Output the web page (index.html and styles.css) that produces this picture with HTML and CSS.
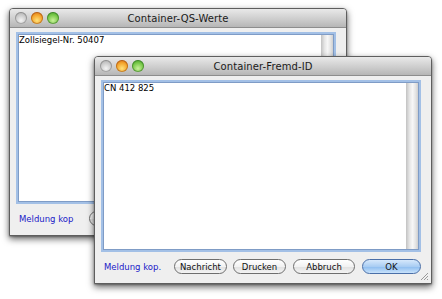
FILE: index.html
```html
<!DOCTYPE html>
<html>
<head>
<meta charset="utf-8">
<link rel="stylesheet" href="styles.css">
</head>
<body>
<div class="desk">
  <div class="win back">
    <div class="titlebar">
      <div class="lights"><span class="light close"></span><span class="light min"></span><span class="light zoom"></span></div>
      <div class="title">Container-QS-Werte</div>
    </div>
    <div class="field">
      <div class="text">Zollsiegel-Nr. 50407</div>
      <div class="scroll"></div>
    </div>
    <div class="actions">
      <span class="link">Meldung kop</span>
      <span class="btn w54">Nachricht</span>
      <span class="btn w54">Drucken</span>
      <span class="btn w63">Abbruch</span>
      <span class="btn w60 default">OK</span>
    </div>
  </div>
  <div class="win front">
    <div class="titlebar">
      <div class="lights"><span class="light close"></span><span class="light min"></span><span class="light zoom"></span></div>
      <div class="title">Container-Fremd-ID</div>
    </div>
    <div class="field">
      <div class="text">CN 412 825</div>
      <div class="scroll"></div>
    </div>
    <div class="actions">
      <span class="link">Meldung kop.</span>
      <span class="btn w54">Nachricht</span>
      <span class="btn w54">Drucken</span>
      <span class="btn w63">Abbruch</span>
      <span class="btn w60 default">OK</span>
    </div>
    <svg class="grip" width="9" height="9" viewBox="0 0 9 9">
      <line x1="1" y1="8" x2="8" y2="1" stroke="#999" stroke-width="1"/>
      <line x1="4" y1="8" x2="8" y2="4" stroke="#999" stroke-width="1"/>
      <line x1="7" y1="8" x2="8" y2="7" stroke="#999" stroke-width="1"/>
    </svg>
  </div>
</div>
</body>
</html>
```
FILE: styles.css
```css
* { box-sizing: border-box; }
html, body { margin: 0; padding: 0; background: #ffffff; }
body { width: 442px; height: 299px; overflow: hidden; font-family: "DejaVu Sans", "Liberation Sans", sans-serif; }
.desk { position: relative; width: 442px; height: 299px; }

.win {
  position: absolute;
  width: 338px;
  height: 228px;
  background: #efefef;
  border: 1px solid #5e5e5e;
  border-radius: 4px 4px 0 0;
  box-shadow: 0 3px 7px rgba(0,0,0,0.6), 0 1px 2px rgba(0,0,0,0.3);
  display: flex;
  flex-direction: column;
}
.back { left: 9px; top: 8px; }
.front { left: 94px; top: 56px; }

.titlebar {
  position: relative;
  height: 19px;
  flex: none;
  background: linear-gradient(#e9e9e9, #cbcbcb 60%, #b6b6b6);
  border-bottom: 1px solid #8d8d8d;
  border-radius: 3px 3px 0 0;
  display: flex;
  align-items: center;
  justify-content: center;
}
.lights {
  position: absolute;
  left: 5px;
  top: 3px;
  display: flex;
  gap: 4px;
}
.light {
  width: 12px;
  height: 12px;
  border-radius: 50%;
  display: block;
}
.light.close { background: radial-gradient(circle at 50% 70%, #f4f4f4, #c4c4c4 60%, #9c9c9c); box-shadow: inset 0 0 0 1px rgba(100,100,100,0.45); }
.light.min { background: radial-gradient(circle at 50% 70%, #ffe27a, #f3a22a 55%, #c0561a); box-shadow: inset 0 0 0 1px rgba(140,60,0,0.45); }
.light.zoom { background: radial-gradient(circle at 50% 70%, #c9f19a, #75c746 55%, #358c26); box-shadow: inset 0 0 0 1px rgba(30,90,20,0.45); }
.title {
  font-size: 10px;
  color: #1a1a1a;
  letter-spacing: 0.1px;
  margin-top: 1px;
}

.field {
  position: relative;
  flex: none;
  margin: 4px 10px 0 6px;
  height: 172px;
  background: #ffffff;
  border: 2px solid #a3c0e6;
  box-shadow: inset 0 0 0 1px #7f9cc6;
  display: flex;
}
.text {
  flex: 1;
  font-size: 8.5px;
  color: #000;
  padding: 1px 0 0 1px;
}
.scroll {
  width: 12px;
  flex: none;
  margin: 1px 1px 1px 0;
  background: linear-gradient(to right, #c2c2c2, #e6e6e6 30%, #f7f7f7 55%, #e4e4e4 80%, #cfcfcf);
}

.actions {
  flex: none;
  height: 15px;
  margin: 7px 10px 0 9px;
  display: flex;
  align-items: center;
  gap: 6px;
}
.link {
  font-size: 8.5px;
  color: #2020c8;
  width: 61px;
  margin-right: 4px;
}
.btn {
  height: 15px;
  border: 1px solid #6e6e6e;
  border-radius: 8px;
  background: linear-gradient(#ffffff, #f2f2f2 50%, #e0e0e0 51%, #f4f4f4);
  font-size: 8.5px;
  color: #111;
  display: flex;
  align-items: center;
  justify-content: center;
}
.w54 { width: 54px; }
.w63 { width: 63px; margin-left: 1px; }
.w60 { width: 60px; margin-left: 1px; }
.btn.default {
  border-color: #4a6fa8;
  background: linear-gradient(#d6e8fb, #a9cdf3 50%, #8cbcef 51%, #c8e2fb);
}
.grip { position: absolute; right: 2px; bottom: 2px; }
```
